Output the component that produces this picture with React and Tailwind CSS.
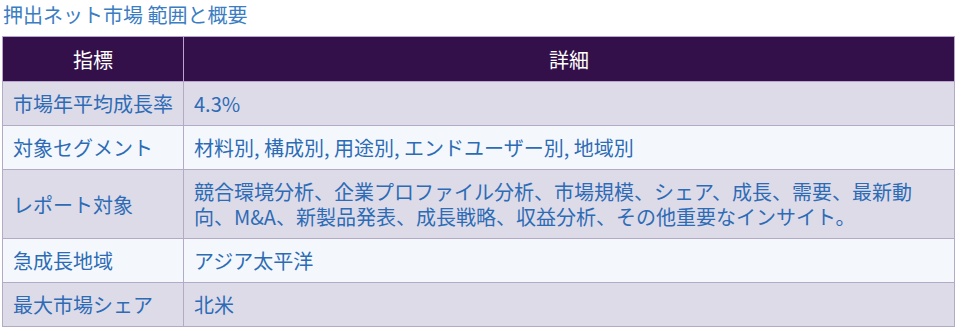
const rows = [
  { label: '市場年平均成長率', value: '4.3%' },
  { label: '対象セグメント', value: '材料別, 構成別, 用途別, エンドユーザー別, 地域別' },
  {
    label: 'レポート対象',
    value: '競合環境分析、企業プロファイル分析、市場規模、シェア、成長、需要、最新動向、M&A、新製品発表、成長戦略、収益分析、その他重要なインサイト。',
  },
  { label: '急成長地域', value: 'アジア太平洋' },
  { label: '最大市場シェア', value: '北米' },
];

export default function App() {
  return (
    <div
      className="w-[958px] h-[328px] bg-white overflow-hidden"
      style={{ fontFamily: '"Noto Sans CJK JP", "Noto Sans", sans-serif' }}
    >
      <h2 className="pl-[3px] text-[20px] leading-[29px] text-[#3b7dc2] font-normal mb-[7px]">
        押出ネット市場 範囲と概要
      </h2>

      <table className="ml-[2px] w-[953px] border-collapse border border-[#b3aac5] text-[20px] leading-[25px]">
        <thead>
          <tr className="bg-[#34104a] text-white h-[45px]">
            <th className="w-[181px] border border-[#b9a6cf] font-normal text-center">指標</th>
            <th className="border border-[#b9a6cf] font-normal text-center">詳細</th>
          </tr>
        </thead>
        <tbody className="text-[#2d6cb5]">
          {rows.map((row, i) => (
            <tr key={row.label} className={i % 2 === 0 ? 'bg-[#dedbe9]' : 'bg-[#f4f8fc]'}>
              <td className="border border-[#b3aac5] px-[10px] py-[9px] align-middle">{row.label}</td>
              <td className="border border-[#b3aac5] pl-[10px] pr-[28px] py-[9px] align-middle">{row.value}</td>
            </tr>
          ))}
        </tbody>
      </table>
    </div>
  );
}
